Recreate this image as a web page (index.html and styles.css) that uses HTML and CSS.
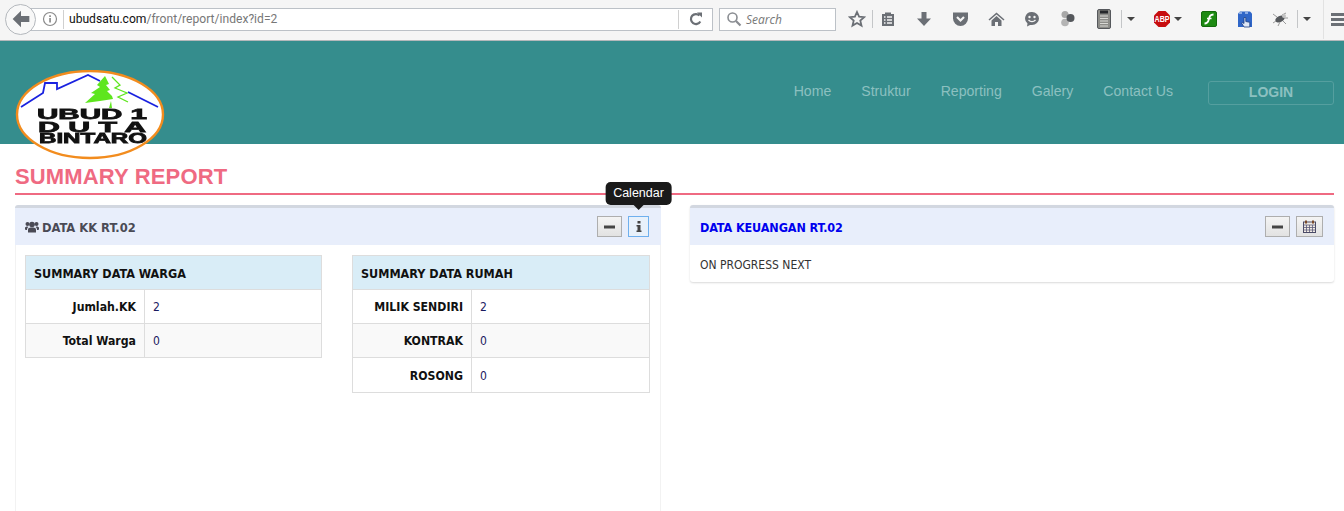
FILE: index.html
```html
<!DOCTYPE html>
<html lang="id">
<head>
<meta charset="UTF-8">
<title>Summary Report</title>
<link rel="stylesheet" href="styles.css">
</head>
<body>

<!-- Toolbar browser -->
<div class="browser-bar">
    <div class="back-btn">
        <svg width="20" height="20" viewBox="0 0 18 18"><path d="M9 1.500 1.500 9 9 16.500V11.800H16.500V6.200H9z" fill="#6b6f75"/></svg>
    </div>
    <div class="url-box">
        <svg class="url-info" width="16" height="16" viewBox="0 0 16 16"><circle cx="8" cy="8" r="6.500" fill="none" stroke="#8a8a8a" stroke-width="1.200"/><rect x="7.200" y="7" width="1.700" height="4.500" fill="#8a8a8a"/><rect x="7.200" y="4.300" width="1.700" height="1.700" fill="#8a8a8a"/></svg>
        <span class="url-text"><b>ubudsatu.com</b>/front/report/index?id=2</span>
        <span class="reload">
            <svg width="16" height="16" viewBox="0 0 16 16"><path d="M12.300 10.500A5 5 0 1 1 11.500 4.500" fill="none" stroke="#6b6f75" stroke-width="2.200"/><path d="M9 1.500h5v5z" fill="#6b6f75"/></svg>
        </span>
    </div>
    <div class="search-box">
        <svg width="16" height="16" viewBox="0 0 16 16"><circle cx="6.500" cy="6.500" r="4.500" fill="none" stroke="#8a8d92" stroke-width="1.600"/><path d="M10 10l4.500 4.500" stroke="#8a8d92" stroke-width="2.200"/></svg>
        <span>Search</span>
    </div>

    <span class="tool tool-star"><svg width="18" height="18" viewBox="0 0 18 18"><path d="M9 2l2.100 4.700 5.100.5-3.900 3.400 1.200 5L9 13l-4.500 2.600 1.200-5-3.900-3.400 5.100-.5z" fill="none" stroke="#6b6f75" stroke-width="1.800"/></svg></span>
    <span class="tool-sep"></span>
    <span class="tool tool-clip"><svg width="16" height="16" viewBox="0 0 16 16"><path d="M2 3h3V1.500h6V3h3v12H2z" fill="#6b6f75"/><path d="M7 6h5M7 9h5M7 12h5M4 6h1.500M4 9h1.500M4 12h1.500" stroke="#f5f5f5" stroke-width="1.300"/></svg></span>
    <span class="tool"><svg width="16" height="16" viewBox="0 0 16 16"><path d="M5.500 1h5v6.500H15L8 15 1 7.500h4.500z" fill="#6b6f75"/></svg></span>
    <span class="tool"><svg width="17" height="16" viewBox="0 0 17 16"><path d="M1 1.500h15v6a7.500 7.500 0 0 1-15 0z" fill="#6b6f75"/><path d="M5 6l3.500 3.500L12 6" fill="none" stroke="#f5f5f5" stroke-width="2.200"/></svg></span>
    <span class="tool"><svg width="17" height="16" viewBox="0 0 17 16"><path d="M8.500 1.500 0.500 8.500 1.500 9.500 8.500 3.500 15.500 9.500 16.500 8.500z" fill="#6b6f75"/><path d="M3.500 9.500 8.500 5l5 4.500V15H10v-4H7v4H3.500z" fill="#6b6f75"/></svg></span>
    <span class="tool"><svg width="16" height="16" viewBox="0 0 16 16"><path d="M8 1a7 6.500 0 0 1 0 13H6l-3 1.500.5-3A6.500 6.500 0 0 1 8 1z" fill="#6b6f75"/><circle cx="5.500" cy="6" r="1.200" fill="#f5f5f5"/><circle cx="10.500" cy="6" r="1.200" fill="#f5f5f5"/><path d="M4.500 9c2 2 5 2 7 0" fill="none" stroke="#f5f5f5" stroke-width="1.300"/></svg></span>
    <span class="tool"><svg width="16" height="18" viewBox="0 0 16 18"><circle cx="5" cy="4.500" r="3.500" fill="#a8a8a8"/><circle cx="5" cy="12.500" r="3.800" fill="#b4b4b4"/><circle cx="10.500" cy="8" r="4" fill="#55585c"/></svg></span>
    <span class="tool tool-device"><svg width="14" height="20" viewBox="0 0 14 20"><rect x="0.500" y="0.500" width="13" height="19" rx="1.500" fill="#8c8c88" stroke="#55585c"/><rect x="3" y="1.500" width="8" height="3" fill="#26282b"/><path d="M3 7h8M3 9.500h8M3 12h8M3 14.500h8M3 17h8" stroke="#d8d8d4" stroke-width="1.200"/></svg></span>
    <span class="tool-sep"></span>
    <span class="tool-drop"><i class="caret"></i></span>
    <span class="tool-abp"><svg width="18" height="18" viewBox="0 0 18 18"><path d="M5.500 1h7L17 5.500v7L12.500 17h-7L1 12.500v-7z" fill="#c70d0f"/><text x="9" y="12" class="abp-text" text-anchor="middle" textLength="15" lengthAdjust="spacingAndGlyphs">ABP</text></svg></span>
    <span class="tool-drop-small"><i class="caret"></i></span>
    <span class="tool"><svg width="16" height="16" viewBox="0 0 16 16"><rect x="0.500" y="0.500" width="15" height="15" rx="1.500" fill="#1d8a12" stroke="#136b0c"/><path d="M12.500 3.500C9 3.500 8.500 5.500 7.800 8.500 7.200 11 6.500 12.500 3.500 12.500" fill="none" stroke="#fff" stroke-width="1.800"/><path d="M6 7.500h4.500" stroke="#fff" stroke-width="1.500"/></svg></span>
    <span class="tool"><svg width="16" height="18" viewBox="0 0 16 18"><path d="M1 3.500 3 1.500h10l2 2V17H1z" fill="#2f66c8"/><path d="M2 3h3M8 3h3" stroke="#a9c4f0" stroke-width="1.300"/><path d="M7 7.500h1.800v4l4 .8V17H7L4.500 13 5.700 12.500 7 13.500z" fill="#dfe8f7" stroke="#1a3c80" stroke-width=".8"/></svg></span>
    <span class="tool tool-bug"><svg width="18" height="16" viewBox="0 0 18 16"><ellipse cx="9" cy="8" rx="5" ry="3" fill="#55585c" transform="rotate(-25 9 8)"/><path d="M11 4l4-2M6 6 2 3M5 10l-3 2M9 11l-2 4M12 10l3 3M13 7l4 0" stroke="#9a9a9a" stroke-width="1"/><circle cx="13" cy="5" r="2" fill="#c4c4c4"/></svg></span>
    <span class="tool-sep"></span>
    <span class="tool-drop"><i class="caret"></i></span>
    <span class="tool-sep tool-sep-light"></span>
    <span class="burger"><i></i><i></i><i></i></span>
</div>

<!-- Header situs -->
<header class="site-header">
    <svg class="logo" width="150" height="90" viewBox="0 0 150 90">
        <ellipse cx="75" cy="44.500" rx="73" ry="43.500" fill="#fff" stroke="#f28c1e" stroke-width="2.400"/>
        <path d="M6 37 28 23 30 13H42V19L73 5 85 11M113 22 143 37" fill="none" stroke="#1a22e0" stroke-width="1.800"/>
        <path d="M90 6 94 14 91 15 95 20 92 21 97 26 98 29 85 31 70 33 80 24 76 23 85 17 82 15z" fill="#5ee61e"/>
        <path d="M94 38 96 31 97 38z" fill="#5ee61e"/>
        <path d="M97 7 105 15 100 18 112 23 103 27 113 32" fill="none" stroke="#5ee61e" stroke-width="1.300"/>
        <text class="logo-text" x="22" y="49" textLength="110" lengthAdjust="spacingAndGlyphs">UBUD 1</text>
        <text class="logo-text" x="23" y="62" textLength="108" lengthAdjust="spacingAndGlyphs">D U T A</text>
        <text class="logo-text" x="24" y="73" textLength="108" lengthAdjust="spacingAndGlyphs">BINTARO</text>
    </svg>
    <nav class="main-nav">
        <a>Home</a>
        <a>Struktur</a>
        <a>Reporting</a>
        <a>Galery</a>
        <a>Contact Us</a>
    </nav>
    <a class="btn-login">LOGIN</a>
</header>

<div class="content">
    <h1 class="page-title">SUMMARY REPORT</h1>

    <div class="panels">
        <!-- Panel data KK -->
        <section class="panel panel-tall">
            <div class="panel-head panel-head-tall">
                <h2 class="panel-title">
                    <svg width="14" height="12" viewBox="0 0 14 12"><circle cx="7" cy="3.500" r="2.800" fill="#4a4a55"/><circle cx="2.500" cy="3" r="2" fill="#4a4a55"/><circle cx="11.500" cy="3" r="2" fill="#4a4a55"/><path d="M3 11.500V8.500C3 7 4.500 6.500 7 6.500s4 .5 4 2v3z" fill="#4a4a55"/><path d="M0 8V7C0 6 1 5.500 2.500 5.500L3.500 6C2.500 6.500 2 7.500 2 9H.5zM14 8V7C14 6 13 5.500 11.500 5.500L10.500 6C11.500 6.500 12 7.500 12 9h1.500z" fill="#4a4a55"/></svg>
                    DATA KK RT.02
                </h2>
                <div class="panel-actions">
                    <button class="icon-btn">
                        <svg width="11" height="4" viewBox="0 0 11 4"><rect width="11" height="3" y="0.500" fill="#444"/></svg>
                    </button>
                    <button class="icon-btn icon-btn-active">
                        <svg width="6" height="11" viewBox="0 0 6 11"><rect x="1.500" y="0" width="3" height="2.500" fill="#444"/><path d="M.5 4H4.500V9.500H5.500V11H.5V9.500H1.500V5.500H.5z" fill="#444"/></svg>
                        <span class="tooltip">Calendar</span>
                    </button>
                </div>
            </div>
            <div class="panel-body tables">
                <table class="summary">
                    <tr><th colspan="2">SUMMARY DATA WARGA</th></tr>
                    <tr><td class="lbl">Jumlah.KK</td><td class="val">2</td></tr>
                    <tr class="alt"><td class="lbl">Total Warga</td><td class="val">0</td></tr>
                </table>
                <table class="summary">
                    <tr><th colspan="2">SUMMARY DATA RUMAH</th></tr>
                    <tr><td class="lbl">MILIK SENDIRI</td><td class="val">2</td></tr>
                    <tr class="alt"><td class="lbl">KONTRAK</td><td class="val">0</td></tr>
                    <tr class="row-last"><td class="lbl">ROSONG</td><td class="val">0</td></tr>
                </table>
            </div>
        </section>

        <!-- Panel keuangan -->
        <section class="panel panel-short">
            <div class="panel-head">
                <h2 class="panel-title panel-title-blue">DATA KEUANGAN RT.02</h2>
                <div class="panel-actions">
                    <button class="icon-btn">
                        <svg width="11" height="4" viewBox="0 0 11 4"><rect width="11" height="3" y="0.500" fill="#444"/></svg>
                    </button>
                    <button class="icon-btn icon-btn-wide">
                        <svg width="13" height="13" viewBox="0 0 13 13"><rect x="0.500" y="2" width="12" height="10.500" fill="#f2ece4" stroke="#4a4a66"/><path d="M.5 5h12M.5 7.500h12M.5 10h12M3.500 5v7M6.500 5v7M9.500 5v7" stroke="#5a5a78" stroke-width=".8"/><path d="M3 .5v3M10 .5v3" stroke="#7a4a2a" stroke-width="2"/></svg>
                    </button>
                </div>
            </div>
            <div class="panel-body panel-note">ON PROGRESS NEXT</div>
        </section>
    </div>
</div>

</body>
</html>
```

FILE: styles.css
```css
/* Estilos */
html, body {
    margin: 0;
    padding: 0;
    height: 511px;
    overflow: hidden;
    background-color: #fff;
    font-family: "DejaVu Sans", sans-serif;
}

/* Toolbar browser */
.browser-bar {
    display: flex;
    align-items: center;
    box-sizing: border-box;
    height: 41px;
    padding: 0 0 2px 5px;
    background-color: #f5f5f5;
    border-bottom: 1px solid #b5b8bb;
    overflow: hidden;
}

.back-btn {
    position: relative;
    z-index: 1;
    display: flex;
    align-items: center;
    justify-content: center;
    flex: none;
    box-sizing: border-box;
    width: 31px;
    height: 31px;
    background-color: #f8f8f8;
    border: 1px solid #b4b8bd;
    border-radius: 50%;
}

.url-box {
    display: flex;
    align-items: center;
    flex: none;
    box-sizing: border-box;
    width: 698px;
    height: 23px;
    margin-left: -21px;
    padding-left: 26px;
    background-color: #fff;
    border: 1px solid #bcc1c7;
    font-family: Roboto, sans-serif;
    font-size: 12.100px;
    color: #777;
}

.url-info {
    flex: none;
}

.url-text {
    flex: 1;
    margin-left: 5px;
    padding-left: 5px;
    border-left: 1px solid #d0d0d0;
    line-height: 19px;
}

.url-text b {
    font-weight: 400;
    color: #111;
}

.reload {
    display: flex;
    align-items: center;
    justify-content: center;
    width: 33px;
    height: 19px;
    border-left: 1px solid #d0d0d0;
}

.search-box {
    display: flex;
    align-items: center;
    gap: 4px;
    flex: none;
    box-sizing: border-box;
    width: 117px;
    height: 23px;
    margin-left: 6px;
    padding-left: 6px;
    background-color: #fff;
    border: 1px solid #bcc1c7;
    font-family: "Open Sans", sans-serif;
    font-size: 12px;
    font-style: italic;
    color: #777;
}

.tool {
    display: flex;
    align-items: center;
    justify-content: center;
    flex: none;
    width: 36px;
}

.tool-star {
    width: 30px;
    margin-left: 6px;
}

.tool-clip {
    width: 30px;
    margin-right: 3px;
}

.tool-device {
    width: 35px;
}

.tool-bug {
    width: 34px;
}

.tool-sep {
    flex: none;
    width: 1px;
    height: 18px;
    background-color: #c4c6c8;
}

.tool-sep-light {
    height: 40px;
    margin-left: 7px;
    background-color: #e2e2e2;
}

.tool-drop {
    display: flex;
    justify-content: center;
    flex: none;
    width: 18px;
}

.tool-abp {
    display: flex;
    justify-content: center;
    flex: none;
    width: 24px;
    margin-left: 10px;
}

.abp-text {
    font-family: "Liberation Sans", sans-serif;
    font-size: 8.500px;
    font-weight: 700;
    fill: #fff;
}

.tool-drop-small {
    display: flex;
    justify-content: center;
    flex: none;
    width: 8px;
    margin-right: 9px;
}

.caret {
    display: block;
    width: 0;
    height: 0;
    border-top: 4px solid #444;
    border-left: 4px solid transparent;
    border-right: 4px solid transparent;
}

.burger {
    display: flex;
    flex-direction: column;
    gap: 2px;
    flex: none;
    width: 16px;
    margin-left: 7px;
}

.burger i {
    display: block;
    height: 3px;
    background-color: #6b6f75;
}

/* Header situs */
.site-header {
    position: relative;
    display: flex;
    align-items: flex-start;
    justify-content: flex-end;
    box-sizing: border-box;
    height: 103px;
    padding: 40px 10px 0 0;
    background-color: #358d8d;
    font-family: "Liberation Sans", sans-serif;
}

.logo {
    position: absolute;
    left: 15px;
    top: 29px;
    filter: blur(0.3px);
}

.logo-text {
    font-family: "Liberation Sans", sans-serif;
    font-size: 15px;
    font-weight: 700;
    fill: #111;
    stroke: #111;
    stroke-width: 0.800px;
}

.main-nav {
    display: flex;
    gap: 30px;
    margin-right: 35px;
    font-size: 14.100px;
    line-height: 20px;
    color: #8cc0c0;
}

.btn-login {
    box-sizing: border-box;
    width: 126px;
    height: 24px;
    border: 1px solid #559f9f;
    border-radius: 3px;
    text-align: center;
    font-size: 14px;
    font-weight: 700;
    line-height: 20px;
    color: #8cc0c0;
}

/* Contenido */
.content {
    padding: 0 10px 0 15px;
}

.page-title {
    margin: 0 0 10px 0;
    padding-top: 20px;
    padding-bottom: 3px;
    border-bottom: 2px solid #ef6a82;
    font-family: "Liberation Sans", sans-serif;
    font-size: 22px;
    font-weight: 700;
    letter-spacing: 0.150px;
    line-height: 26px;
    color: #ef6a82;
}

.panels {
    display: grid;
    grid-template-columns: 646px 644px;
    gap: 29px;
    align-items: start;
}

.panel {
    box-sizing: border-box;
    background-color: #fff;
    border-top: 3px solid #d2d7e0;
    border-radius: 3px 3px 0 0;
}

.panel-tall {
    height: 306px;
}

.panel-short {
    box-shadow: 0 1px 2px rgba(0, 0, 0, 0.15);
    border-radius: 3px;
}

.panel-head {
    display: flex;
    align-items: center;
    justify-content: space-between;
    box-sizing: border-box;
    height: 37px;
    padding: 0 11px 0 10px;
    background-color: #e8eefb;
}

.panel-head-tall {
    padding-right: 12px;
}

.panel-title {
    display: flex;
    align-items: center;
    gap: 3px;
    margin: 0;
    padding-top: 1px;
    font-size: 12.800px;
    font-stretch: condensed;
    font-weight: 700;
    color: #4a4a55;
}

.panel-title-blue {
    font-size: 12.500px;
    letter-spacing: -0.100px;
    color: #0000ee;
}

.panel-actions {
    display: flex;
    gap: 6px;
}

.icon-btn {
    position: relative;
    display: flex;
    align-items: center;
    justify-content: center;
    box-sizing: border-box;
    width: 25px;
    height: 21px;
    padding: 0;
    background: linear-gradient(#f4f4f4, #e2e2e2);
    border: 1px solid #aeaeae;
}

.icon-btn-active {
    width: 21px;
    background: #e8f1fb;
    border-color: #6fb0ee;
}

.icon-btn-wide {
    width: 27px;
}

.tooltip {
    position: absolute;
    left: 50%;
    bottom: 31px;
    transform: translateX(-50%);
    padding: 0 8px;
    background-color: #1a1a1a;
    border-radius: 5px;
    font-family: "Liberation Sans", sans-serif;
    font-size: 12.500px;
    line-height: 23px;
    color: #fff;
    white-space: nowrap;
}

.tooltip::after {
    content: "";
    position: absolute;
    left: 50%;
    top: 100%;
    margin-left: -5px;
    border-top: 5px solid #1a1a1a;
    border-left: 5px solid transparent;
    border-right: 5px solid transparent;
}

.panel-note {
    padding: 13px 10px 9px;
    font-size: 12px;
    font-stretch: condensed;
    line-height: 15px;
    color: #333;
}

/* Tablas */
.tables {
    display: grid;
    grid-template-columns: 297px 298px;
    gap: 30px;
    align-items: start;
    box-sizing: border-box;
    height: 266px;
    padding: 10px 9px;
    border-left: 1px solid #f2f2f2;
    border-right: 1px solid #f2f2f2;
}

.summary {
    width: 100%;
    border-collapse: collapse;
    font-size: 12.500px;
    font-stretch: condensed;
    color: #111;
}

.summary th {
    height: 32px;
    padding: 1px 8px 0;
    background-color: #d9edf7;
    border: 1px solid #ddd;
    text-align: left;
    font-weight: 700;
}

.summary td {
    height: 32px;
    padding: 1px 8px 0;
    border: 1px solid #ddd;
}

.summary .row-last td {
    height: 33px;
}

.summary .lbl {
    width: 102px;
    text-align: right;
    font-size: 12.200px;
    font-weight: 700;
}

.summary .val {
    color: #1a1a60;
    font-size: 12px;
}

.alt td {
    background-color: #f9f9f9;
}
```
